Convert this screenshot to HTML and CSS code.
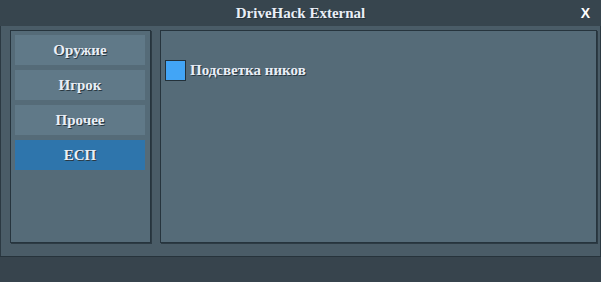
FILE: index.html
```html
<!DOCTYPE html>
<html lang="ru">
<head>
<meta charset="utf-8">
<title>DriveHack External</title>
<link rel="stylesheet" href="styles.css">
</head>
<body>
<div class="window">
  <header class="titlebar">
    <span class="title">DriveHack External</span>
    <span class="close">X</span>
  </header>
  <main class="main">
    <nav class="sidebar">
      <div class="tab">Оружие</div>
      <div class="tab">Игрок</div>
      <div class="tab">Прочее</div>
      <div class="tab active">ЕСП</div>
    </nav>
    <section class="content">
      <label class="option">
        <span class="check"></span>
        <span class="label">Подсветка ников</span>
      </label>
    </section>
  </main>
  <footer class="statusbar"></footer>
</div>
</body>
</html>
```
FILE: styles.css
```css
html, body {
  margin: 0;
  padding: 0;
  width: 601px;
  height: 282px;
  overflow: hidden;
  background: #37444d;
}
.window {
  width: 601px;
  height: 282px;
  display: flex;
  flex-direction: column;
  font-family: "Liberation Serif", "DejaVu Serif", serif;
  color: #e9eef6;
}
.titlebar {
  height: 26px;
  background: #37454e;
  position: relative;
  display: flex;
  align-items: center;
  justify-content: center;
}
.title {
  font-size: 15px;
  font-weight: bold;
  text-shadow: 1px 1px 0 #25323a;
}
.close {
  position: absolute;
  right: 11px;
  top: 5px;
  font-family: "Liberation Sans", Arial, sans-serif;
  font-weight: bold;
  font-size: 14px;
  color: #ffffff;
}
.main {
  height: 230px;
  box-sizing: border-box;
  background: #4a5c67;
  border-left: 1px solid #2b3942;
  border-right: 1px solid #2b3942;
  padding: 4px 3px 0 9px;
  display: flex;
  gap: 9px;
}
.sidebar, .content {
  height: 213px;
  box-sizing: border-box;
  background: #556b78;
  border: 1px solid #26343d;
  box-shadow: 1px 1px 0 #2d3b44;
}
.sidebar {
  width: 141px;
  padding: 4px;
  display: flex;
  flex-direction: column;
  gap: 5px;
}
.tab {
  width: 130px;
  height: 30px;
  background: #607988;
  display: flex;
  align-items: center;
  justify-content: center;
  font-size: 15px;
  font-weight: bold;
  text-shadow: 1px 1px 0 #2a3942;
}
.tab.active {
  background: #2e75ac;
}
.content {
  flex: 1;
  padding: 29px 4px;
}
.option {
  display: flex;
  align-items: center;
  gap: 4px;
}
.check {
  width: 19px;
  height: 19px;
  background: #42a5f6;
  border: 1px solid #23313a;
}
.label {
  font-size: 15px;
  font-weight: bold;
  text-shadow: 1px 1px 0 #2a3942;
}
.statusbar {
  flex: 1;
  background: #37444d;
  border-top: 1px solid #26333b;
}
```
